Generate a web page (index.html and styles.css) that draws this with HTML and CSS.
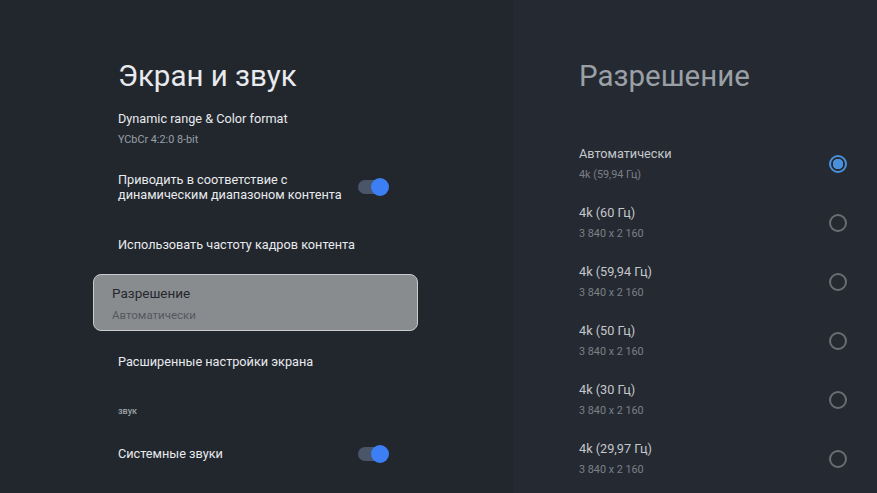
FILE: index.html
```html
<!DOCTYPE html>
<html lang="ru">
<head>
    <meta charset="UTF-8">
    <meta name="viewport" content="width=device-width, initial-scale=1.0">
    <title>Экран и звук</title>
    <link rel="stylesheet" href="styles.css">
</head>
<body>
    <div class="screen">
        <div class="settings">
            <h1 class="panel-title">Экран и звук</h1>

            <div class="item item-first">
                <div class="item-title">Dynamic range &amp; Color format</div>
                <div class="item-sub">YCbCr 4:2:0 8-bit</div>
            </div>

            <div class="item item-toggle">
                <div class="item-title two-lines">Приводить в соответствие с<br>динамическим диапазоном контента</div>
                <span class="switch"><span class="switch-thumb"></span></span>
            </div>

            <div class="item item-plain">
                <div class="item-title">Использовать частоту кадров контента</div>
            </div>

            <div class="item item-focused">
                <div class="item-title">Разрешение</div>
                <div class="item-sub">Автоматически</div>
            </div>

            <div class="item item-advanced">
                <div class="item-title">Расширенные настройки экрана</div>
            </div>

            <div class="section-label">звук</div>

            <div class="item item-toggle item-sounds">
                <div class="item-title">Системные звуки</div>
                <span class="switch"><span class="switch-thumb"></span></span>
            </div>
        </div>

        <div class="options">
            <h2 class="panel-title options-title">Разрешение</h2>

            <div class="option-list">
                <div class="option">
                    <div>
                        <div class="option-title">Автоматически</div>
                        <div class="option-sub">4k (59,94 Гц)</div>
                    </div>
                    <span class="radio checked"></span>
                </div>
                <div class="option">
                    <div>
                        <div class="option-title">4k (60 Гц)</div>
                        <div class="option-sub">3 840 x 2 160</div>
                    </div>
                    <span class="radio"></span>
                </div>
                <div class="option">
                    <div>
                        <div class="option-title">4k (59,94 Гц)</div>
                        <div class="option-sub">3 840 x 2 160</div>
                    </div>
                    <span class="radio"></span>
                </div>
                <div class="option">
                    <div>
                        <div class="option-title">4k (50 Гц)</div>
                        <div class="option-sub">3 840 x 2 160</div>
                    </div>
                    <span class="radio"></span>
                </div>
                <div class="option">
                    <div>
                        <div class="option-title">4k (30 Гц)</div>
                        <div class="option-sub">3 840 x 2 160</div>
                    </div>
                    <span class="radio"></span>
                </div>
                <div class="option">
                    <div>
                        <div class="option-title">4k (29,97 Гц)</div>
                        <div class="option-sub">3 840 x 2 160</div>
                    </div>
                    <span class="radio"></span>
                </div>
            </div>
        </div>
    </div>
</body>
</html>
```

FILE: styles.css
```css
body {
    margin: 0;
    padding: 0;
    font-family: Roboto, "Noto Sans", sans-serif;
    background-color: #22272e;
    overflow: hidden;
}

.screen {
    display: flex;
    width: 877px;
    height: 493px;
}

.settings {
    width: 513px;
    box-sizing: border-box;
    padding: 58px 0 0 118px;
    background-color: #22272e;
}

.panel-title {
    margin: 0;
    font-size: 29.5px;
    line-height: 36px;
    font-weight: 400;
    color: #e8eaed;
}

.item {
    width: 271px;
}

.item-title {
    font-size: 12.7px;
    line-height: 18px;
    color: #e8eaed;
}

.item-sub {
    margin-top: 5px;
    font-size: 10.8px;
    line-height: 14px;
    color: #9aa0a6;
}

.item-first {
    margin-top: 16px;
}

.item-toggle {
    display: flex;
    align-items: center;
    justify-content: space-between;
    height: 30px;
    margin-top: 25px;
}

.two-lines {
    line-height: 15px;
}

.item-plain {
    margin-top: 34px;
}

.item-focused {
    width: 325px;
    height: 57px;
    box-sizing: border-box;
    margin: 20px 0 0 -25px;
    padding: 9px 18px 0;
    background-color: #898c8f;
    border: 1.5px solid #c9cbcd;
    border-radius: 8px;
}

.item-focused .item-title {
    font-size: 13.5px;
    color: #24282d;
}

.item-focused .item-sub {
    margin-top: 6px;
    font-size: 11.5px;
    color: #55595e;
}

.item-advanced {
    margin-top: 22px;
}

.section-label {
    margin-top: 34px;
    font-size: 9px;
    line-height: 12px;
    font-weight: 500;
    color: #9aa0a6;
}

.item-sounds {
    margin-top: 22px;
}

.switch {
    position: relative;
    width: 31px;
    height: 18px;
}

.switch::before {
    content: "";
    position: absolute;
    left: 0;
    top: 2px;
    width: 26px;
    height: 14px;
    border-radius: 7px;
    background-color: #4b5569;
}

.switch-thumb {
    position: absolute;
    right: 0;
    top: 0;
    width: 18px;
    height: 18px;
    border-radius: 50%;
    background-color: #3c7ef3;
}

.options {
    flex: 1;
    box-sizing: border-box;
    padding: 58px 30px 0 66px;
    background-color: #252a32;
}

.options-title {
    color: #9aa0a6;
}

.option-list {
    margin-top: 40px;
}

.option {
    display: flex;
    align-items: center;
    justify-content: space-between;
    height: 59px;
}

.option-title {
    font-size: 12.7px;
    line-height: 18px;
    color: #c4c7cb;
}

.option-sub {
    margin-top: 5px;
    font-size: 10.8px;
    line-height: 14px;
    color: #7b8087;
}

.radio {
    width: 18px;
    height: 18px;
    box-sizing: border-box;
    border: 2px solid #6a6d71;
    border-radius: 50%;
}

.radio.checked {
    border-color: #4a8fdb;
    background: radial-gradient(circle, #4a8fdb 0 5px, transparent 5.5px);
}
```
